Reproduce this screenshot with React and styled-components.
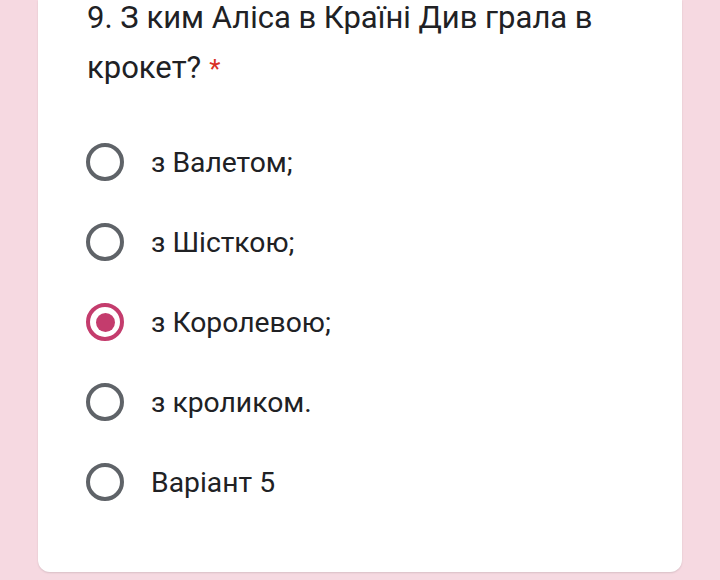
import React from 'react';
import styled, { createGlobalStyle } from 'styled-components';

const Global = createGlobalStyle`
  html, body {
    margin: 0;
    padding: 0;
    background: #f6d9e1;
  }
  body {
    font-family: Roboto, "Noto Sans", sans-serif;
  }
`;

const Page = styled.div`
  width: 720px;
  height: 580px;
  overflow: hidden;
  background: #f6d9e1;
  padding: 0 38px;
  box-sizing: border-box;
`;

const Card = styled.section`
  display: flow-root;
  background: #fff;
  height: 572px;
  border-radius: 0 0 12px 12px;
  box-shadow: 0 1px 2px rgba(0, 0, 0, 0.12);
  padding: 0 49px;
  box-sizing: border-box;
`;

const Title = styled.h2`
  margin: -7px 0 0;
  font-family: Roboto, "Noto Sans", sans-serif;
  font-weight: 400;
  font-size: 31px;
  line-height: 50px;
  color: #202124;
`;

const Star = styled.span`
  color: #d93025;
  margin-left: 8px;
  font-size: 26px;
`;

const Options = styled.ul`
  list-style: none;
  margin: 49px 0 0;
  padding: 0;
  display: flex;
  flex-direction: column;
  gap: 42px;
`;

const Option = styled.li`
  display: flex;
  align-items: center;
  gap: 27px;
  height: 38px;
`;

const Radio = styled.span`
  flex: none;
  width: 38px;
  height: 38px;
  box-sizing: border-box;
  border-radius: 50%;
  border: 4px solid ${p => (p.$checked ? '#c43c6d' : '#5f6368')};
  display: flex;
  align-items: center;
  justify-content: center;
  margin-left: -1px;

  &::after {
    content: '';
    display: ${p => (p.$checked ? 'block' : 'none')};
    width: 19px;
    height: 19px;
    border-radius: 50%;
    background: #c43c6d;
  }
`;

const Label = styled.span`
  font-family: Roboto, "Noto Sans", sans-serif;
  font-size: 28.3px;
  color: #202124;
`;

const options = [
  { label: 'з Валетом;' },
  { label: 'з Шісткою;' },
  { label: 'з Королевою;', checked: true },
  { label: 'з кроликом.' },
  { label: 'Варіант 5' },
];

const App = () => {
  return (
    <Page>
      <Global />
      <Card>
        <Title>
          9. З ким Аліса в Країні Див грала в крокет?<Star>*</Star>
        </Title>
        <Options>
          {options.map(o => (
            <Option key={o.label}>
              <Radio $checked={o.checked} />
              <Label>{o.label}</Label>
            </Option>
          ))}
        </Options>
      </Card>
    </Page>
  );
};

export default App;
